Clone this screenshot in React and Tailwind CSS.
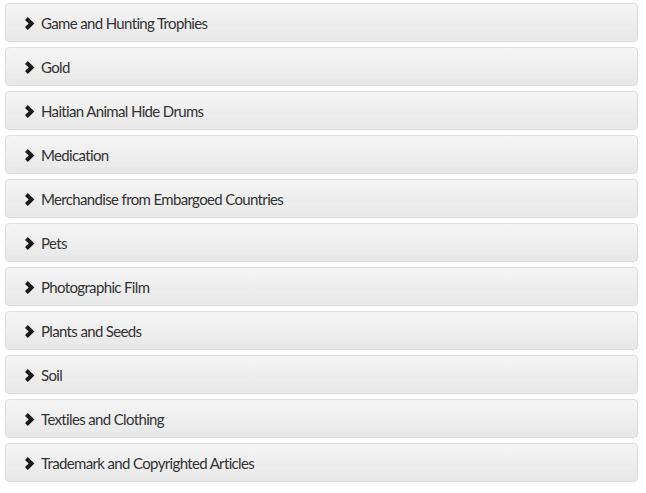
import React from 'react';

const items = [
  'Game and Hunting Trophies',
  'Gold',
  'Haitian Animal Hide Drums',
  'Medication',
  'Merchandise from Embargoed Countries',
  'Pets',
  'Photographic Film',
  'Plants and Seeds',
  'Soil',
  'Textiles and Clothing',
  'Trademark and Copyrighted Articles',
];

const Chevron = () => (
  <svg width="11" height="13" viewBox="0 0 11 13" className="shrink-0">
    <path d="M1 2.9 L3.8 0 L10.4 6.5 L3.8 13 L1 10.1 L4.7 6.5 Z" fill="#1a1a1a" />
  </svg>
);

export default function App() {
  return (
    <div className="bg-white pt-[3px] pl-[5px] pr-[8px] pb-[5px] font-['Lato',sans-serif]">
      {items.map(item => (
        <div
          key={item}
          className="mb-[5px] h-[39px] rounded-[4px] border border-[#dddddd] bg-gradient-to-b from-[#f5f5f5] to-[#e8e8e8] flex items-center pl-[18px] pt-[2px] gap-[6px] text-[15px] text-[#333] tracking-[-0.65px]"
        >
          <Chevron />
          <span>{item}</span>
        </div>
      ))}
    </div>
  );
}
